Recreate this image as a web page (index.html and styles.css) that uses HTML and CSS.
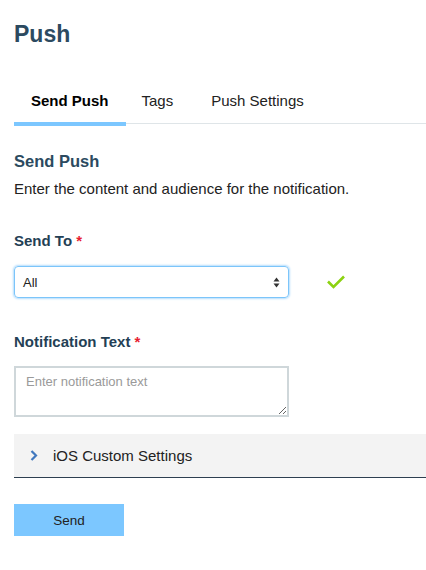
FILE: index.html
```html
<!DOCTYPE html>
<html lang="en">
<head>
<meta charset="utf-8">
<title>Push</title>
<link rel="stylesheet" href="styles.css">
</head>
<body>
<main class="page">
  <h1 class="title">Push</h1>
  <nav class="tabs">
    <a class="tab active">Send Push</a>
    <a class="tab tab-tags">Tags</a>
    <a class="tab tab-settings">Push Settings</a>
  </nav>

  <h2 class="heading">Send Push</h2>
  <p class="desc">Enter the content and audience for the notification.</p>

  <label class="label">Send To <span class="req">*</span></label>
  <div class="select-row">
    <div class="select">
      <span class="select-value">All</span>
      <svg class="select-arrows" width="7" height="11" viewBox="0 0 7 11">
        <path d="M3.5 0.5 L6.5 4.5 L0.5 4.5 Z" fill="#333"/>
        <path d="M3.5 10.5 L6.5 6.5 L0.5 6.5 Z" fill="#333"/>
      </svg>
    </div>
    <svg class="check" width="18" height="14" viewBox="0 0 18 14">
      <path d="M1 6.5 L6.5 12 L17 1.5" fill="none" stroke="#8cd211" stroke-width="2.6"/>
    </svg>
  </div>

  <label class="label label-gap">Notification Text <span class="req">*</span></label>
  <textarea class="textarea" placeholder="Enter notification text"></textarea>

  <div class="accordion">
    <svg class="chevron" width="8" height="11" viewBox="0 0 8 11">
      <path d="M1.5 1 L6 5.5 L1.5 10" fill="none" stroke="#4178be" stroke-width="2.2"/>
    </svg>
    <span class="acc-title">iOS Custom Settings</span>
  </div>

  <button class="send">Send</button>
</main>
</body>
</html>
```

FILE: styles.css
```css
html, body {
  margin: 0;
  padding: 0;
  background: #ffffff;
}

body {
  font-family: "Liberation Sans", Arial, Helvetica, sans-serif;
  color: #222222;
}

.page {
  padding: 20px 0 0 14px;
  display: flex;
  flex-direction: column;
  align-items: flex-start;
}

.title {
  margin: 0;
  font-size: 23px;
  line-height: 28px;
  font-weight: bold;
  color: #2c4a60;
}

.tabs {
  margin-top: 44px;
  display: flex;
  align-self: stretch;
  border-bottom: 1px solid #dfe5e8;
}

.tab {
  display: block;
  padding: 0 17px 12px 17px;
  font-size: 15px;
  line-height: 18px;
  color: #222222;
  border-bottom: 4px solid transparent;
  margin-bottom: -3px;
}

.tab-tags {
  padding-left: 16px;
  padding-right: 19px;
}

.tab-settings {
  padding-left: 19px;
}

.tab.active {
  font-weight: bold;
  color: #000000;
  border-bottom-color: #7cc7ff;
}

.heading {
  margin: 27px 0 0 0;
  font-size: 16.5px;
  line-height: 20px;
  font-weight: bold;
  color: #2c4a60;
}

.desc {
  margin: 8px 0 0 0;
  font-size: 15px;
  line-height: 20px;
  color: #222222;
}

.label {
  margin-top: 32px;
  font-size: 15px;
  line-height: 20px;
  font-weight: bold;
  color: #243f55;
}

.label-gap {
  margin-top: 34px;
}

.req {
  color: #e71d32;
}

.select-row {
  margin-top: 15px;
  display: flex;
  align-items: center;
  gap: 38px;
}

.select {
  box-sizing: border-box;
  width: 275px;
  height: 32px;
  border: 1px solid #7cc5fa;
  border-radius: 4px;
  box-shadow: 0 0 2px 1px #b5ddfc;
  display: flex;
  align-items: center;
  justify-content: space-between;
  padding: 0 8px 0 8px;
}

.select-value {
  font-size: 13px;
  color: #222222;
}

.select-arrows {
  display: block;
}

.check {
  display: block;
}

.textarea {
  margin-top: 14px;
  box-sizing: border-box;
  width: 275px;
  height: 51px;
  border: 2px solid #cfd7da;
  border-radius: 0;
  padding: 6px 10px;
  font-family: "Liberation Sans", Arial, Helvetica, sans-serif;
  font-size: 13px;
  line-height: 16px;
  color: #222222;
  outline: none;
  resize: both;
}

.textarea::placeholder {
  color: #9a9a9a;
}

.accordion {
  margin-top: 17px;
  align-self: stretch;
  box-sizing: border-box;
  height: 44px;
  background: #f3f3f3;
  border-bottom: 1px solid #2d3f50;
  display: flex;
  align-items: center;
  padding-left: 16px;
  gap: 15px;
}

.chevron {
  display: block;
}

.acc-title {
  font-size: 15px;
  color: #222222;
}

.send {
  margin-top: 26px;
  width: 110px;
  height: 32px;
  border: none;
  border-radius: 0;
  background: #7cc7ff;
  font-family: "Liberation Sans", Arial, Helvetica, sans-serif;
  font-size: 13.5px;
  color: #222222;
  padding: 0;
}
```
